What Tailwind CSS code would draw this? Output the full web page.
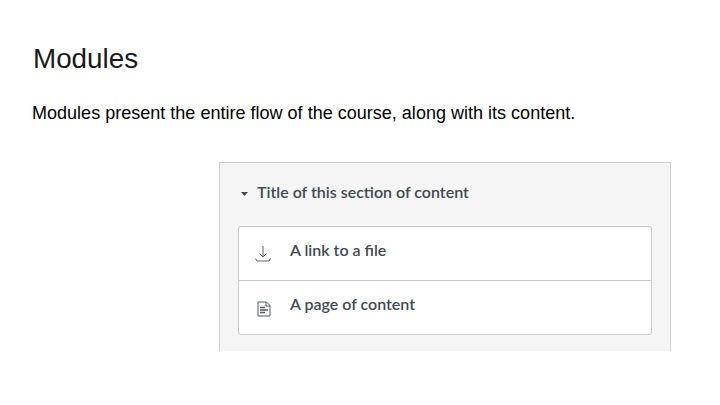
<!DOCTYPE html>
<html>
<head>
<meta charset="utf-8">
<script src="https://cdn.jsdelivr.net/npm/@tailwindcss/browser@4"></script>
</head>
<body class="bg-white">
<main class="w-[720px] h-[405px] overflow-hidden flex flex-col font-['Liberation_Sans',Arial,sans-serif] text-black">
  <h1 class="ml-[33px] mt-[42px] h-[34px] text-[27.8px] leading-[34px] font-normal text-[#1a1a1a]">Modules</h1>
  <p class="ml-[32px] mt-[25px] h-[24px] text-[18.05px] leading-[24px]">Modules present the entire flow of the course, along with its content.</p>
  <section class="ml-[219px] mt-[37px] w-[452px] h-[189px] bg-[#f5f5f5] border-t border-x border-[#cfcfcf] pl-[18px] pr-[18px] font-['Lato',sans-serif] text-[#3f4a52]">
    <div class="h-[63px] flex items-center pb-[6px] pl-[3px] gap-[9px]">
      <svg width="7" height="4" viewBox="0 0 7 4" class="mt-[5px]"><path d="M0 0h7L3.500 4z" fill="#3f4a52"/></svg>
      <h2 class="text-[16px] font-semibold leading-5">Title of this section of content</h2>
    </div>
    <ul class="bg-white border border-[#c9c9c9] rounded-[3px] h-[109px] flex flex-col">
      <li class="h-[54px] flex items-center border-b border-[#c9c9c9] pl-[16px] gap-[19px]">
        <svg width="16" height="16" viewBox="0 0 16 16" fill="none" stroke="#5b656c" stroke-width="1" class="mt-[1px]"><path d="M8 0v11M4.500 7.500 8 11l3.500-3.500"/><path d="M0.500 12.500 2 15h12l1.500-2.500"/></svg>
        <span class="text-[16px] font-semibold leading-5 -mt-[7px]">A link to a file</span>
      </li>
      <li class="h-[53px] flex items-center pl-[18px] gap-[19px]">
        <svg width="14" height="16" viewBox="0 0 14 16" fill="none" stroke="#4f5a62" stroke-width="1" class="mt-[3px]"><path d="M1 1h8.500L13 4.500V15H1z"/><path d="M9 1v4h4"/><path d="M3 6.500h5M3 9h8M3 11.500h5" stroke-width="1.300"/></svg>
        <span class="text-[16px] font-semibold leading-5 -mt-[7px]">A page of content</span>
      </li>
    </ul>
  </section>
</main>
</body>
</html>
